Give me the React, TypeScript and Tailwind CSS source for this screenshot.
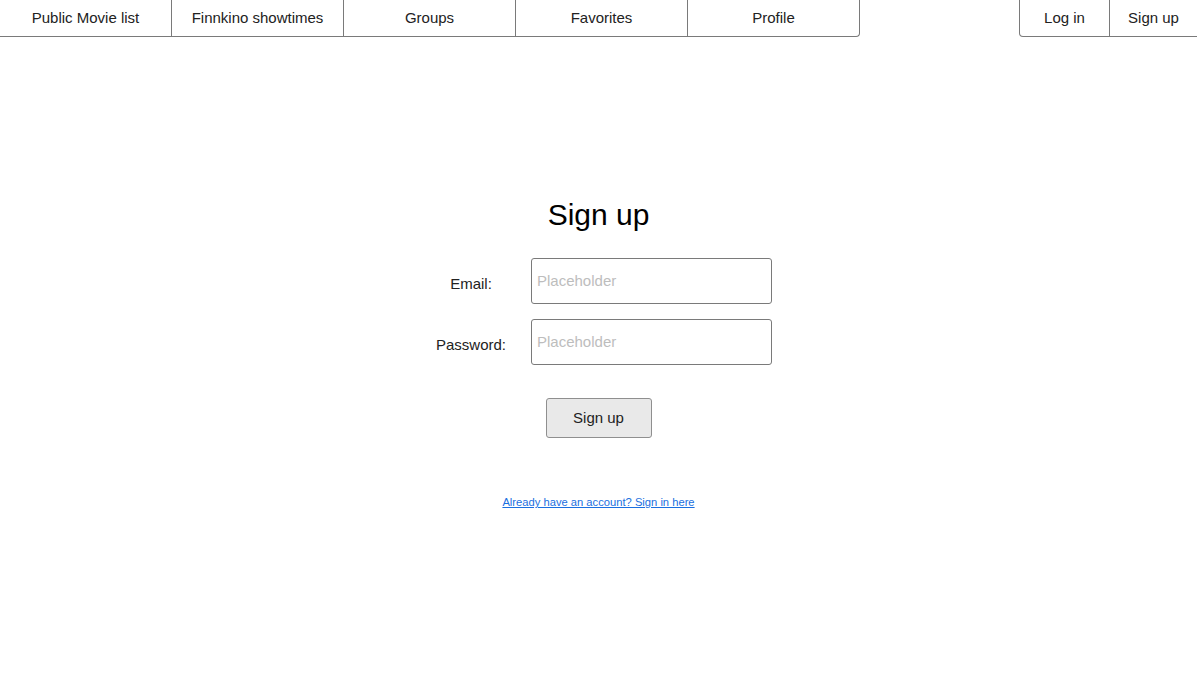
const leftLinks = ["Public Movie list", "Finnkino showtimes", "Groups", "Favorites", "Profile"];

function NavBar() {
  return (
    <div className="flex justify-between items-start">
      <div className="flex">
        {leftLinks.map((label, i) => (
          <a
            key={label}
            href="#"
            className={`w-[172px] h-[37px] flex items-center justify-center border-b border-r border-[#7a7a7a] text-[15px] text-[#222] ${
              i === leftLinks.length - 1 ? "rounded-br-[4px]" : ""
            }`}
          >
            {label}
          </a>
        ))}
      </div>
      <div className="flex">
        <a
          href="#"
          className="w-[91px] h-[37px] flex items-center justify-center border-l border-b border-r border-[#7a7a7a] rounded-bl-[4px] text-[15px] text-[#222]"
        >
          Log in
        </a>
        <a
          href="#"
          className="w-[87px] h-[37px] flex items-center justify-center border-b border-[#7a7a7a] text-[15px] text-[#222]"
        >
          Sign up
        </a>
      </div>
    </div>
  );
}

function Field({ label, type }: { label: string; type: string }) {
  return (
    <div className="flex items-center gap-[12px]">
      <label className="w-[96px] text-center pt-[7px] text-[15px] text-[#222]">{label}</label>
      <input
        type={type}
        placeholder="Placeholder"
        className="w-[241px] h-[46px] border border-[#7a7a7a] rounded-[3px] px-[5px] pb-[2px] text-[15px] placeholder:text-[#bdbdbd] outline-none"
      />
    </div>
  );
}

export default function App() {
  return (
    <div className="min-h-[673px] bg-white font-['Liberation_Sans',Arial,sans-serif]">
      <NavBar />
      <div className="flex flex-col items-center pt-[160px]">
        <h1 className="text-[30px] leading-[35px] text-black">Sign up</h1>
        <div className="flex flex-col gap-[15px] mt-[26px] pr-[2px]">
          <Field label="Email:" type="email" />
          <Field label="Password:" type="password" />
        </div>
        <button className="mt-[33px] w-[106px] h-[40px] bg-[#e9e9e9] border border-[#8f8f8f] rounded-[3px] text-[15px] text-[#222]">
          Sign up
        </button>
        <a href="#" className="mt-[56px] text-[11.2px] text-[#1a6fe0] underline">
          Already have an account? Sign in here
        </a>
      </div>
    </div>
  );
}
